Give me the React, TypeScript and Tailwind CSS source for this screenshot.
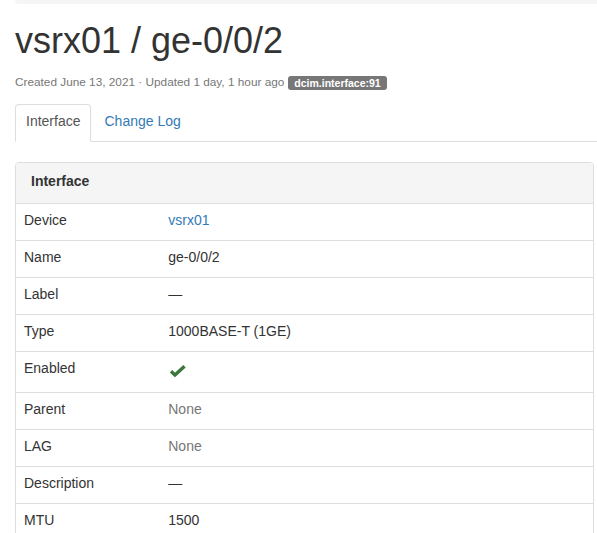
import React from "react";

type Row = {
  label: string;
  value: React.ReactNode;
};

function CheckMark() {
  return (
    <span className="flex h-6 items-center">
      <svg width="18" height="12" viewBox="0 0 18 12" className="mt-[3px] ml-[1px]">
        <path
          d="M2 6.2 L6 10 L15.5 1.2"
          fill="none"
          stroke="#3c763d"
          strokeWidth="3.4"
          strokeLinejoin="miter"
        />
      </svg>
    </span>
  );
}

const rows: Row[] = [
  { label: "Device", value: <a className="text-[#337ab7]">vsrx01</a> },
  { label: "Name", value: "ge-0/0/2" },
  { label: "Label", value: "—" },
  { label: "Type", value: "1000BASE-T (1GE)" },
  { label: "Enabled", value: <CheckMark /> },
  { label: "Parent", value: <span className="text-[#777]">None</span> },
  { label: "LAG", value: <span className="text-[#777]">None</span> },
  { label: "Description", value: "—" },
  { label: "MTU", value: "1500" },
];

export default function App() {
  return (
    <div className="min-h-[533px] bg-white font-['Liberation_Sans',Arial,sans-serif] text-[14px] text-[#333]">
      {/* breadcrumb bottom edge */}
      <div className="ml-[15px] h-[4px] rounded-bl-[4px] bg-[#f5f5f5]" />

      <h1 className="mt-[17px] ml-[15px] text-[36px] leading-[1.1] font-normal">
        vsrx01 / ge-0/0/2
      </h1>

      <div className="mt-[14px] ml-[15px] flex h-[17px] items-center text-[11.8px] text-[#777]">
        <span>Created June 13, 2021 · Updated 1 day, 1 hour ago</span>
        <span className="ml-[4px] flex h-[14px] items-center rounded-[3px] bg-[#777] px-[6px] text-[10.5px] font-bold leading-none text-white">
          dcim.interface:91
        </span>
      </div>

      <ul className="mt-[12px] ml-[15px] flex border-b border-[#ddd]">
        <li className="-mb-px">
          <a className="block rounded-t-[4px] border border-[#ddd] border-b-white bg-white px-[10px] pt-[6px] pb-[10px] leading-5 text-[#555]">
            Interface
          </a>
        </li>
        <li className="-mb-px ml-[2px]">
          <a className="block rounded-t-[4px] border border-transparent px-[10px] pt-[6px] pb-[10px] leading-5 text-[#337ab7]">
            Change Log
          </a>
        </li>
      </ul>

      <div className="mt-[20px] ml-[15px] mr-[3px] rounded-[4px] border border-[#ddd]">
        <div className="rounded-t-[3px] border-b border-[#ddd] bg-[#f5f5f5] px-[15px] pt-[8px] pb-[12px] font-bold leading-5">
          Interface
        </div>
        {rows.map((row, i) => (
          <div
            key={row.label}
            className={`flex ${i > 0 ? "border-t border-[#ddd]" : ""}`}
          >
            <div className="w-1/4 px-2 pt-[6px] pb-[10px] leading-5">{row.label}</div>
            <div className="flex-1 px-2 pt-[6px] pb-[10px] leading-5">{row.value}</div>
          </div>
        ))}
      </div>
    </div>
  );
}
